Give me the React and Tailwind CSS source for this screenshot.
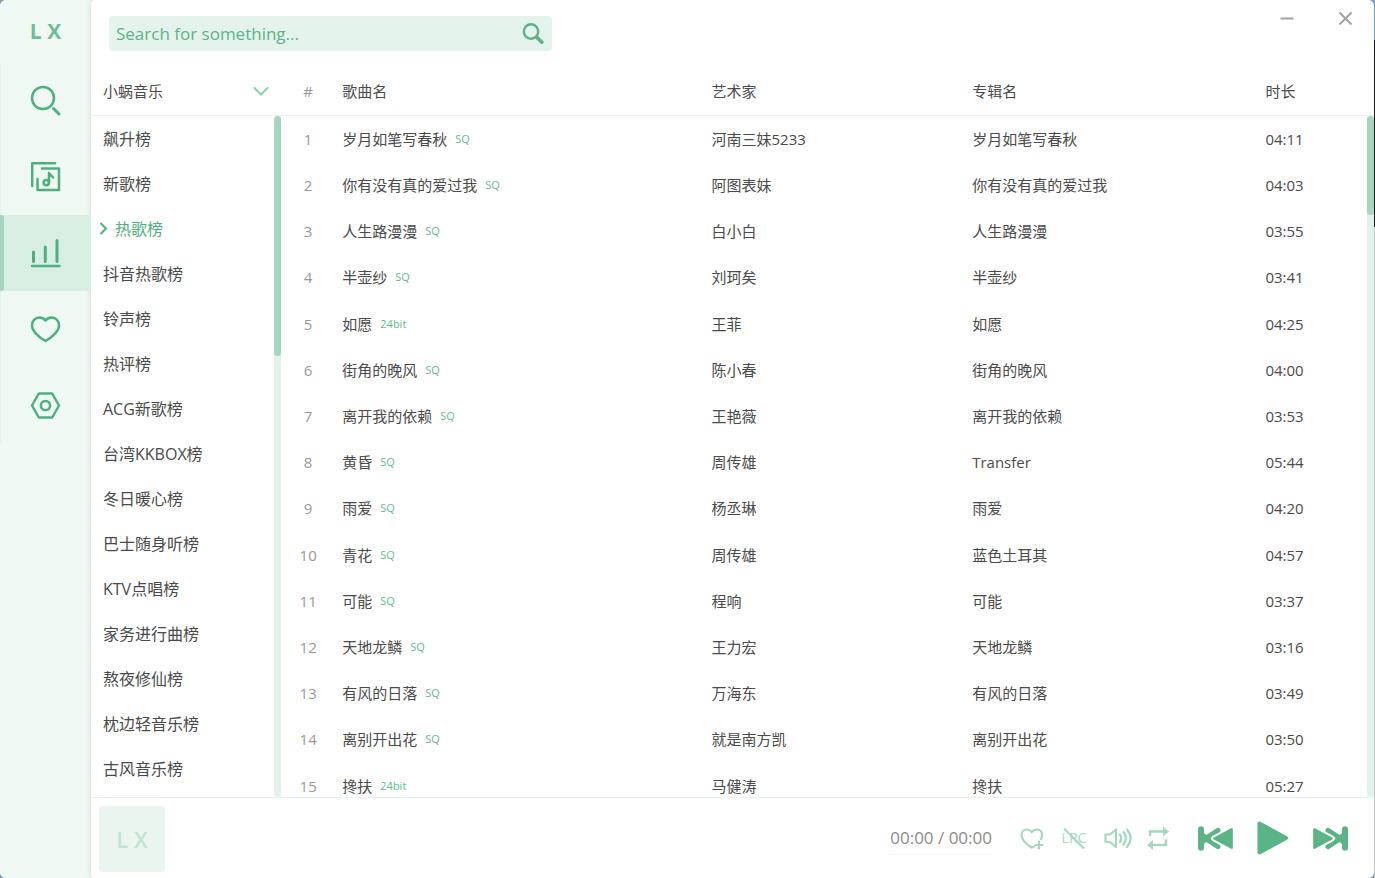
import clsx from 'clsx';

const charts = [
  '飙升榜', '新歌榜', '热歌榜', '抖音热歌榜', '铃声榜', '热评榜', 'ACG新歌榜', '台湾KKBOX榜',
  '冬日暖心榜', '巴士随身听榜', 'KTV点唱榜', '家务进行曲榜', '熬夜修仙榜', '枕边轻音乐榜', '古风音乐榜',
];

const songs = [
  ['岁月如笔写春秋', 'SQ', '河南三妹5233', '岁月如笔写春秋', '04:11'],
  ['你有没有真的爱过我', 'SQ', '阿图表妹', '你有没有真的爱过我', '04:03'],
  ['人生路漫漫', 'SQ', '白小白', '人生路漫漫', '03:55'],
  ['半壶纱', 'SQ', '刘珂矣', '半壶纱', '03:41'],
  ['如愿', '24bit', '王菲', '如愿', '04:25'],
  ['街角的晚风', 'SQ', '陈小春', '街角的晚风', '04:00'],
  ['离开我的依赖', 'SQ', '王艳薇', '离开我的依赖', '03:53'],
  ['黄昏', 'SQ', '周传雄', 'Transfer', '05:44'],
  ['雨爱', 'SQ', '杨丞琳', '雨爱', '04:20'],
  ['青花', 'SQ', '周传雄', '蓝色土耳其', '04:57'],
  ['可能', 'SQ', '程响', '可能', '03:37'],
  ['天地龙鳞', 'SQ', '王力宏', '天地龙鳞', '03:16'],
  ['有风的日落', 'SQ', '万海东', '有风的日落', '03:49'],
  ['离别开出花', 'SQ', '就是南方凯', '离别开出花', '03:50'],
  ['搀扶', '24bit', '马健涛', '搀扶', '05:27'],
];

const navItems = [
  {
    label: '搜索',
    icon: (
      <>
        <circle cx="12" cy="12" r="11" />
        <path d="M22.5 22.5 28 28" strokeWidth="3" />
      </>
    ),
  },
  {
    label: '歌单',
    icon: (
      <>
        <path d="M24 1.2H1.2V24" />
        <path d="M11 6.5H28V28H6.5V17" />
        <circle cx="15.3" cy="20.6" r="2.7" />
        <path d="M18 20.5V11l4 4.5" />
      </>
    ),
  },
  {
    label: '排行榜',
    icon: (
      <>
        <path d="M2.5 14V23.500M14.300 9V23.500M26 2.500V23.500" strokeWidth="3" />
        <path d="M1 28H28.500" />
      </>
    ),
  },
  {
    label: '收藏',
    icon: (
      <path d="M14.500 27C9 24 1 17.500 1 11.500 1 6.800 4.500 3.500 8.300 3.500c2.600 0 4.600 1 6.200 3 1.600-2 3.600-3 6.200-3C24.500 3.500 28 6.800 28 11.500 28 17.500 20 24 14.500 27Z" />
    ),
  },
  {
    label: '设置',
    icon: (
      <>
        <path d="M1 15.500 7.800 3.500H21.200L28 15.500 21.200 27.500H7.800Z" />
        <circle cx="14.500" cy="15.500" r="4.600" />
      </>
    ),
  },
];

function NavBar() {
  return (
    <aside className="flex w-[91px] shrink-0 flex-col bg-[#f0f8f4]">
      <div className="flex h-[63px] items-center justify-center text-[21px] font-bold text-[#6dc095]">L X</div>
      <nav className="flex flex-col">
        {navItems.map((item) => {
          const active = item.label === '排行榜';
          return (
            <button
              key={item.label}
              aria-label={item.label}
              className={clsx(
                'relative flex h-19 items-center justify-center border-l',
                active ? 'border-[#a9d3bd] bg-[#d9eee3]' : 'border-[#e3f2ea]'
              )}
            >
              {active && <span className="absolute inset-y-0 left-0 w-[3px] rounded-r-sm bg-[#a9d3bd]" />}
              <svg
                viewBox="0 0 30 30"
                className="size-[30px] overflow-visible fill-none stroke-[#4db07e]"
                strokeWidth="2.500"
                strokeLinecap="round"
                strokeLinejoin="round"
              >
                {item.icon}
              </svg>
            </button>
          );
        })}
      </nav>
    </aside>
  );
}

function ScrollBar({ thumbClass }) {
  return (
    <div className="w-[7px] flex-1 rounded-full bg-[#e2f2ea]">
      <div className={clsx('w-full rounded-full bg-[#a6d7be]', thumbClass)} />
    </div>
  );
}

function TopBar() {
  return (
    <header className="flex items-start justify-between pl-[18px]">
      <form className="mt-4 flex h-[35px] w-[443px] items-center rounded bg-[#e4f3eb] pr-2 pl-[7px]">
        <input
          type="text"
          aria-label="Search"
          placeholder="Search for something..."
          className="min-w-0 flex-1 bg-transparent text-[17px] text-[#5cb488] outline-none placeholder:text-[#5cb488]"
        />
        <button type="button" aria-label="Search">
          <svg viewBox="0 0 22 22" className="size-[22px] fill-none stroke-[#5bb486]" strokeLinecap="round">
            <circle cx="9" cy="8.500" r="7.200" strokeWidth="2.400" />
            <path d="m14.500 14 5.300 5.300" strokeWidth="3.600" />
          </svg>
        </button>
      </form>
      <div className="flex gap-11 pt-[11px] pr-[22px]">
        <button aria-label="Minimize">
          <svg viewBox="0 0 14 14" className="size-[14px] stroke-[#a3a3a3] stroke-2">
            <path d="M0.500 7.500H13.500" />
          </svg>
        </button>
        <button aria-label="Close">
          <svg viewBox="0 0 14 14" className="size-[14px] stroke-[#a3a3a3] stroke-2">
            <path d="m1.500 1.500 12 12M13.500 1.500l-12 12" />
          </svg>
        </button>
      </div>
    </header>
  );
}

function ChartList() {
  return (
    <section className="flex w-[190px] shrink-0 flex-col">
      <div className="relative h-12 shrink-0 border-b border-[#e9f4ef]">
        <select
          aria-label="音源"
          className="h-full w-full appearance-none bg-transparent pl-3 text-[15px] outline-none"
        >
          <option>小蜗音乐</option>
        </select>
        <svg
          viewBox="0 0 16 10"
          className="pointer-events-none absolute top-[19px] right-3 h-[10px] w-4 fill-none stroke-[#8fd0ae] stroke-2"
          strokeLinecap="round"
        >
          <path d="m1.500 1 6.500 6.500 6.500-6.500" />
        </svg>
      </div>
      <div className="flex min-h-0 flex-1">
        <ul className="flex-1 overflow-hidden text-base">
          {charts.map((name) => {
            const active = name === '热歌榜';
            return (
              <li key={name}>
                <button
                  className={clsx(
                    'flex h-[45px] w-full items-center whitespace-nowrap',
                    active ? 'gap-1.5 pl-2 text-[#4db07e]' : 'pl-3'
                  )}
                >
                  {active && (
                    <svg viewBox="0 0 10 14" className="h-[14px] w-[10px] fill-none stroke-current stroke-2">
                      <path d="m1.500 1 5.500 5.500L1.500 12" />
                    </svg>
                  )}
                  {name}
                </button>
              </li>
            );
          })}
        </ul>
        <div className="flex flex-col">
          <ScrollBar thumbClass="h-[240px]" />
        </div>
      </div>
    </section>
  );
}

function SongTable() {
  return (
    <section className="flex min-w-0 flex-1">
      <div className="min-w-0 flex-1 overflow-hidden">
        <table className="h-[741px] w-full table-fixed border-separate border-spacing-0 text-left text-[15px]">
          <thead>
            <tr className="h-12 *:border-b *:border-[#e9f4ef] *:px-[7px] *:py-0 *:font-normal">
              <th className="w-[5%] text-center text-[#999999]">#</th>
              <th className="w-[34%]">歌曲名</th>
              <th className="w-[24%]">艺术家</th>
              <th className="w-[27%]">专辑名</th>
              <th className="w-[10%]">时长</th>
            </tr>
          </thead>
          <tbody>
            {songs.map(([title, quality, artist, album, time], i) => (
              <tr key={title} className="*:truncate *:px-[7px] *:py-0">
                <td className="text-center text-[#999999]">{i + 1}</td>
                <td>
                  {title}
                  <span className="ml-2 align-[2px] text-[11px] text-[#5fbb8c]">{quality}</span>
                </td>
                <td>{artist}</td>
                <td>{album}</td>
                <td>{time}</td>
              </tr>
            ))}
          </tbody>
        </table>
      </div>
      <div className="flex flex-col">
        <div className="h-12 border-b border-[#e9f4ef]" />
        <ScrollBar thumbClass="h-[99px]" />
      </div>
    </section>
  );
}

function SkipIcon({ className }) {
  return (
    <svg viewBox="0 0 105 73" className={clsx('h-[25px] w-[35px]', className)} strokeLinejoin="round" strokeLinecap="round">
      <rect width="18" height="73" rx="9" fill="#5bb486" />
      <path d="M60 12 22 36.500 60 61" fill="none" stroke="#5bb486" strokeWidth="15" />
      <path d="M14 18V55L40 36.500Z" fill="#5bb486" />
      <path d="M49 36.500 101 9V64Z" fill="#fff" stroke="#fff" strokeWidth="18" />
      <path d="M49 36.500 101 9V64Z" fill="#5bb486" stroke="#5bb486" strokeWidth="7" />
    </svg>
  );
}

function Player() {
  return (
    <footer className="flex h-[81px] shrink-0 items-center border-t border-[#e9f4ef] pr-[26px] pl-2">
      <div className="mt-0.5 flex size-[66px] items-center justify-center rounded bg-[#eaf5f0] text-[22px] font-semibold text-[#c0e4d1]">
        L X
      </div>
      <div className="ml-auto border-b border-[#f4faf7] pt-1 pb-1 text-[17px] text-[#8a8a8a]">00:00 / 00:00</div>
      <div className="ml-7 flex items-center gap-[18px] text-[#a3d9bd]">
        <button aria-label="收藏">
          <svg viewBox="0 0 24 24" className="size-6 fill-none stroke-current" strokeWidth="2.200" strokeLinecap="round">
            <path d="M14 20.500 11.800 21.500C7 18.500 1.500 14 1.500 9 1.500 5.500 4 3.500 6.800 3.500c2 0 3.700.8 5 2.500 1.300-1.700 3-2.500 5-2.500 3 0 5.200 2 5.200 5.500 0 1.500-.4 3-1 4.200" />
            <path d="M19 15.500v7M15.500 19h7" />
          </svg>
        </button>
        <button aria-label="桌面歌词" className="relative flex size-6 items-center justify-center">
          <span className="font-['Open_Sans',sans-serif] text-sm leading-6">LRC</span>
          <svg viewBox="0 0 24 24" className="absolute inset-0 size-6 stroke-current stroke-2">
            <path d="m2 2.500 20 20" />
          </svg>
        </button>
        <button aria-label="音量">
          <svg viewBox="0 0 28 24" className="h-6 w-7 fill-none stroke-current" strokeWidth="2.200" strokeLinejoin="round">
            <path d="M1.500 8.500H6L12 3.500V21L6 16H1.500Z" />
            <path d="M16 8.500c1.500 2 1.500 5.500 0 7.500M19.500 6c3 4 3 8.500 0 12.500M23 3.500c4.500 5.500 4.500 12 0 17.500" strokeLinecap="round" />
          </svg>
        </button>
        <button aria-label="循环播放" className="-ml-1">
          <svg viewBox="0 0 24 26" className="h-[26px] w-6 fill-none stroke-current" strokeWidth="2.500">
            <path d="M4 11V6.500H17M20 14.500V20H7" />
            <path d="M17 1.500v10l6-5ZM7 15v10l-6-5Z" className="fill-current stroke-none" />
          </svg>
        </button>
      </div>
      <div className="ml-7 flex items-center gap-6">
        <button aria-label="上一首">
          <SkipIcon />
        </button>
        <button aria-label="播放">
          <svg viewBox="0 0 32 34" className="h-[34px] w-8 fill-[#5bb486] stroke-[#5bb486] stroke-4" strokeLinejoin="round">
            <path d="M2.500 2.500V31.500L29 17Z" />
          </svg>
        </button>
        <button aria-label="下一首">
          <SkipIcon className="rotate-180" />
        </button>
      </div>
    </footer>
  );
}

export default function App() {
  return (
    <div className="flex h-screen bg-[#7f9cc0] font-['Open_Sans','Noto_Sans_CJK_SC',sans-serif] text-[#4a4a4a]">
      <div className="flex min-w-0 flex-1 overflow-hidden rounded-md bg-[#f0f8f4]">
        <NavBar />
        <main className="flex min-w-0 flex-1 flex-col rounded-l bg-white shadow-[0_0_5px_rgba(0,0,0,0.15)]">
          <TopBar />
          <div className="mt-[17px] flex min-h-0 flex-1">
            <ChartList />
            <SongTable />
          </div>
          <Player />
        </main>
      </div>
      <div className="flex w-px flex-col bg-[#c4c4c4]">
        <div className="h-10 bg-[#6f9cc4]" />
        <div className="h-[187px] bg-[#1a1a1a]" />
      </div>
    </div>
  );
}
